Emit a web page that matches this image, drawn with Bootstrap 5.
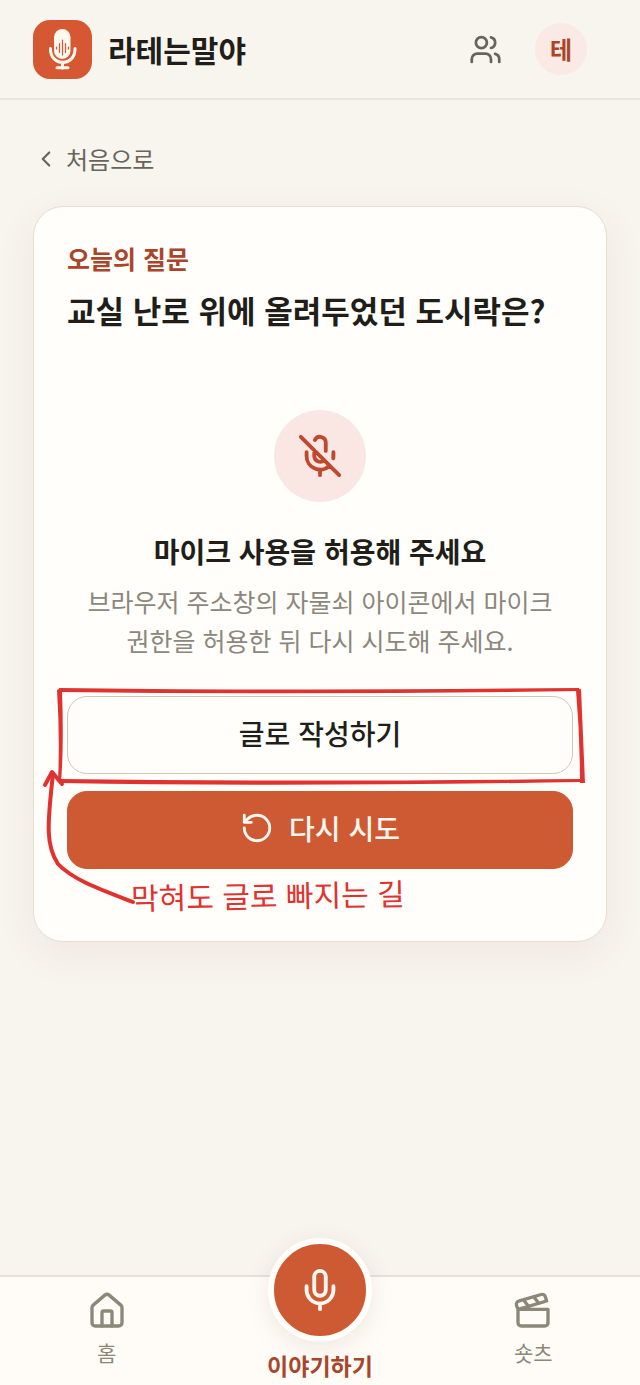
<!DOCTYPE html>
<html lang="ko">
<head>
<meta charset="utf-8">
<meta name="viewport" content="width=device-width, initial-scale=1">
<title>라테는말야</title>
<link href="https://cdn.jsdelivr.net/npm/bootstrap@5.3.0/dist/css/bootstrap.min.css" rel="stylesheet">
<style>
  :root { --brand: #cd5a32; --brand-deep: #a8452b; --ink: #211e1a; --soft: #fbe9e5; --line: #e8ddd0; --paper: #fffefa; --gutter: 33px; }
  body { font-family: "Noto Sans CJK KR", sans-serif; background: #f8f4ee; color: var(--ink); font-size: 24px; }
  svg { flex: none; }
  .ico { fill: none; stroke: currentColor; stroke-width: 2; stroke-linecap: round; stroke-linejoin: round; }
  .topbar { height: 100px; padding: 0 53px 0 var(--gutter); border-bottom: 2px solid #ece5db; }
  .brand-name { font-size: 30px; line-height: 44px; font-weight: 700; color: var(--ink); }
  .logo { width: 59px; height: 59px; }
  .people { color: #67635d; margin-right: 33px; }
  .avatar { width: 52px; height: 52px; background: var(--soft); color: var(--brand-deep); font-weight: 700; font-size: 24px; line-height: 32px; }
  .page-main { padding: 41px var(--gutter) 48px; }
  .back-link { color: #67635d; font-size: 24px; line-height: 36px; gap: 7px; }
  .question-card { --bs-card-bg: var(--paper); --bs-card-border-color: var(--line); --bs-card-border-width: 1px; --bs-card-border-radius: 30px; margin-top: 26px; box-shadow: 0 12px 40px rgba(130, 70, 50, .07); }
  .question-card .card-body { padding: 35px 33px 28px; color: var(--ink); }
  .eyebrow { color: var(--brand-deep); font-size: 25px; line-height: 32px; font-weight: 700; margin-bottom: 12px; }
  .question { font-size: 31px; line-height: 48px; font-weight: 700; margin-bottom: 76px; }
  .mic-state { width: 92px; height: 92px; background: #fae7e4; color: #be4930; margin-bottom: 29px; }
  .state-title { font-size: 28px; line-height: 40px; font-weight: 700; margin-bottom: 11px; }
  .state-text { font-size: 25px; line-height: 39px; color: #8c877c; margin-bottom: 36px; word-break: keep-all; }
  .actions { gap: 17px; }
  .actions .btn { height: 78px; border-radius: 20px; font-size: 28px; font-weight: 500; line-height: 40px; padding: 0 12px 4px; gap: 15px; }
  .btn-write { --bs-btn-color: var(--ink); --bs-btn-border-color: #cfc8b8; --bs-btn-bg: var(--paper); --bs-btn-hover-bg: #f8f4ee; --bs-btn-hover-border-color: #cfc8b8; }
  .btn-retry { --bs-btn-color: #fff8f2; --bs-btn-border-color: var(--brand); --bs-btn-bg: var(--brand); --bs-btn-hover-color: #fff; --bs-btn-hover-bg: #b84f2b; --bs-btn-hover-border-color: #b84f2b; }
  .pen { color: #e0322f; overflow: visible; pointer-events: none; }
  .pen-note { color: #e0322f; font-size: 30px; line-height: 40px; margin: 4px 0 0 64px; transform: rotate(-1deg); }
  .tabbar { height: 110px; background: #fffcf8; border-top: 2px solid #e8e1d8; }
  .tab { color: #8c8778; font-size: 21px; line-height: 30px; }
  .tab-side { padding-top: 14px; gap: 6px; }
  .tab-main { color: var(--brand-deep); font-size: 23px; font-weight: 700; margin-top: -39px; gap: 8px; }
  .record { width: 104px; height: 104px; background: var(--brand); border: 6px solid var(--paper); color: #fff8f2; box-shadow: 0 6px 24px rgba(130, 70, 50, .12); }
</style>
</head>
<body class="d-flex flex-column min-vh-100">
<header class="topbar d-flex align-items-center justify-content-between">
  <a href="#" class="d-flex align-items-center text-decoration-none gap-3">
    <svg class="logo" viewBox="0 0 59 59" aria-hidden="true">
      <rect width="59" height="59" rx="17" fill="#d55832"/>
      <rect x="21" y="9" width="16.500" height="30" rx="8.250" fill="#fff8ee"/>
      <path d="M17.500 28.500C17 47 42.500 47 42 28.500M29.500 42v6" fill="none" stroke="#fff8ee" stroke-width="3" stroke-linecap="round"/>
      <path d="M24 47.800h11" stroke="#fff8ee" stroke-width="3" stroke-linecap="round"/>
      <path d="M23.500 27v2M26.500 23.500v9M29.500 20v15M32.500 23.500v9M35.500 27v2" stroke="#d55832" stroke-width="1.200" stroke-linecap="round"/>
    </svg>
    <span class="brand-name">라테는말야</span>
  </a>
  <div class="d-flex align-items-center">
    <button type="button" class="people btn border-0 p-0 d-flex" aria-label="가족">
      <svg class="ico" width="33" height="33" viewBox="0 0 24 24"><path d="M16 21v-2a4 4 0 0 0-4-4H6a4 4 0 0 0-4 4v2"/><circle cx="9" cy="7" r="4"/><path d="M22 21v-2a4 4 0 0 0-3-3.870M16 3.130a4 4 0 0 1 0 7.750"/></svg>
    </button>
    <a href="#" class="avatar rounded-circle d-flex align-items-center justify-content-center text-decoration-none">테</a>
  </div>
</header>

<main class="page-main flex-grow-1">
  <a href="#" class="back-link d-inline-flex align-items-center text-decoration-none">
    <svg class="ico" width="26" height="26" viewBox="0 0 24 24" aria-hidden="true"><path d="m15 18-6-6 6-6"/></svg>처음으로</a>

  <section class="card question-card">
    <div class="card-body">
      <p class="eyebrow">오늘의 질문</p>
      <h1 class="question">교실 난로 위에 올려두었던 도시락은?</h1>
      <div class="text-center">
        <div class="mic-state rounded-circle d-flex align-items-center justify-content-center mx-auto">
          <svg class="ico" width="46" height="46" viewBox="0 0 24 24" aria-hidden="true"><path d="m2 2 20 20M18.890 13.230A7.120 7.120 0 0 0 19 12v-2M5 10v2a7 7 0 0 0 12 5M15 9.340V5a3 3 0 0 0-5.680-1.330M9 9v3a3 3 0 0 0 5.120 2.120M12 19v3"/></svg>
        </div>
        <h2 class="state-title">마이크 사용을 허용해 주세요</h2>
        <p class="state-text">브라우저 주소창의 자물쇠 아이콘에서 마이크 권한을 허용한 뒤 다시 시도해 주세요.</p>
      </div>
      <div class="actions position-relative d-flex flex-column">
        <button type="button" class="btn btn-write">글로 작성하기</button>
        <button type="button" class="btn btn-retry d-flex align-items-center justify-content-center">
          <svg class="ico" width="34" height="34" viewBox="0 0 24 24" aria-hidden="true"><path d="M3 12a9 9 0 1 0 9-9 9.750 9.750 0 0 0-6.740 2.740L3 8M3 3v5h5"/></svg>다시 시도</button>
        <!-- pen frame round the first button and the arrow that leads to the note -->
        <svg class="pen position-absolute top-0 start-0 w-100 h-100" viewBox="0 0 506 173" preserveAspectRatio="none" fill="currentColor" aria-hidden="true">
          <path d="M-8-8Q200-5 512-8L513-5Q250-1-7-4Z"/>
          <path d="M-10-6L-6-8-5-5Q-3 50-6 86L-9 86Q-7 40-10-6Z"/>
          <path d="M-7 83Q220 86 515 83L516 86Q220 91-7 87Z"/>
          <path d="M509-6L514-7Q516 40 518 87L513 87Q513 40 509-6Z"/>
          <path d="M-14 78C-20 130-21 150-9 168C6 184 35 194 66 206" fill="none" stroke="currentColor" stroke-width="4" stroke-linecap="round"/>
          <path d="M-22 89L-15 76-5 88" fill="none" stroke="currentColor" stroke-width="4" stroke-linecap="round" stroke-linejoin="round"/>
        </svg>
      </div>
      <p class="pen-note">막혀도 글로 빠지는 길</p>
    </div>
  </section>
</main>

<nav class="tabbar row g-0 text-center">
  <div class="col-4"><a href="#" class="tab tab-side d-flex flex-column align-items-center text-decoration-none">
    <svg class="ico" width="40" height="40" viewBox="0 0 24 24" aria-hidden="true"><path d="M15 21v-8a1 1 0 0 0-1-1h-4a1 1 0 0 0-1 1v8"/><path d="M3 10a2 2 0 0 1 .709-1.528l7-5.999a2 2 0 0 1 2.582 0l7 5.999A2 2 0 0 1 21 10v9a2 2 0 0 1-2 2H5a2 2 0 0 1-2-2z"/></svg>홈</a></div>
  <div class="col-4"><a href="#" class="tab tab-main d-flex flex-column align-items-center text-decoration-none">
    <span class="record rounded-circle d-flex align-items-center justify-content-center"><svg class="ico" width="46" height="46" viewBox="0 0 24 24" aria-hidden="true"><rect x="9" y="2" width="6" height="13" rx="3"/><path d="M19 10v2a7 7 0 0 1-14 0v-2M12 19v3"/></svg></span>이야기하기</a></div>
  <div class="col-4"><a href="#" class="tab tab-side d-flex flex-column align-items-center text-decoration-none">
    <svg class="ico" width="40" height="40" viewBox="0 0 24 24" aria-hidden="true"><path d="M20.200 6 3 11l-.9-2.400c-.3-1.100.3-2.200 1.300-2.500l13.500-4c1.100-.3 2.200.3 2.500 1.300ZM6.200 5.300l3.100 3.900M12.400 3.400l3.100 4M3 11h18v8a2 2 0 0 1-2 2H5a2 2 0 0 1-2-2Z"/></svg>숏츠</a></div>
</nav>
<script src="https://cdn.jsdelivr.net/npm/bootstrap@5.3.0/dist/js/bootstrap.bundle.min.js"></script>
</body>
</html>
